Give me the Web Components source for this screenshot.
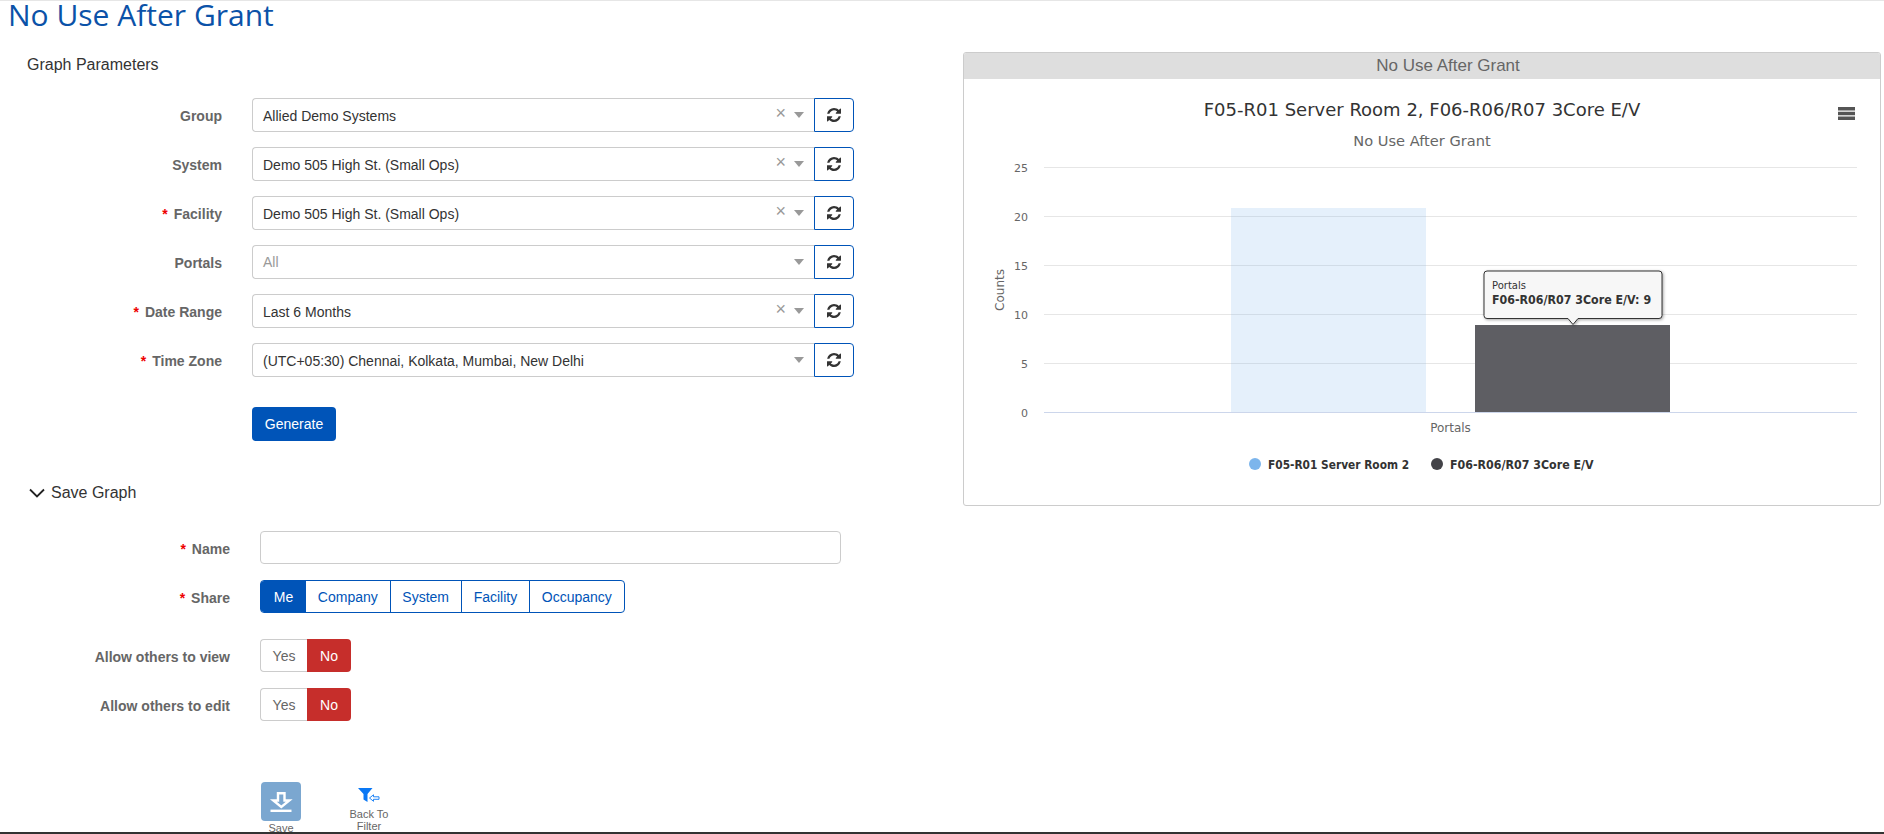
<!DOCTYPE html>
<html lang="en">
<head>
<meta charset="UTF-8">
<title>No Use After Grant</title>
<style>
  html, body { margin: 0; height: 100%; overflow: hidden; background: #fff; }
  body { font-family: "Liberation Sans", Arial, sans-serif; }
</style>
</head>
<body>
<report-page>
  <page-title slot="title">No Use After Grant</page-title>

  <form-section slot="left" heading="Graph Parameters">
    <param-row label="Group"><select-box value="Allied Demo Systems" clearable></select-box><refresh-btn></refresh-btn></param-row>
    <param-row label="System"><select-box value="Demo 505 High St. (Small Ops)" clearable></select-box><refresh-btn></refresh-btn></param-row>
    <param-row label="Facility" required><select-box value="Demo 505 High St. (Small Ops)" clearable></select-box><refresh-btn></refresh-btn></param-row>
    <param-row label="Portals"><select-box placeholder="All"></select-box><refresh-btn></refresh-btn></param-row>
    <param-row label="Date Range" required><select-box value="Last 6 Months" clearable></select-box><refresh-btn></refresh-btn></param-row>
    <param-row label="Time Zone" required><select-box value="(UTC+05:30) Chennai, Kolkata, Mumbai, New Delhi"></select-box><refresh-btn></refresh-btn></param-row>
    <param-row><primary-btn>Generate</primary-btn></param-row>
  </form-section>

  <save-section slot="left">
    <param-row wide label="Name" required><text-box></text-box></param-row>
    <param-row wide label="Share" required><seg-group active="Me" items="Me,Company,System,Facility,Occupancy"></seg-group></param-row>
    <param-row wide label="Allow others to view" class="gap"><yes-no></yes-no></param-row>
    <param-row wide label="Allow others to edit"><yes-no></yes-no></param-row>
    <save-actions></save-actions>
  </save-section>

  <chart-panel slot="right" heading="No Use After Grant"></chart-panel>
</report-page>

<script>
// small helper so every element gets the same open shadow root setup
function shadow(el, html) {
  el.attachShadow({ mode: 'open' }).innerHTML = html;
}

customElements.define('report-page', class extends HTMLElement {
  constructor() {
    super();
    shadow(this, `
      <style>
        :host { display: flex; flex-direction: column; height: 834px; overflow: hidden;
                border-top: 1px solid #e6e6e6; box-sizing: border-box; }
        .body { flex: 1; min-height: 0; overflow: hidden; }
        .cols { display: flex; align-items: flex-start; }
        .left { width: 963px; flex: none; }
        .right { flex: none; width: 918px; margin-top: 21px; }
        .strip { height: 2px; background: #333; flex: none; }
      </style>
      <div class="body">
        <slot name="title"></slot>
        <div class="cols">
          <div class="left"><slot name="left"></slot></div>
          <div class="right"><slot name="right"></slot></div>
        </div>
      </div>
      <div class="strip"></div>`);
  }
});

customElements.define('page-title', class extends HTMLElement {
  constructor() {
    super();
    shadow(this, `
      <style>
        :host { display: block; height: 30px; padding-left: 8px;
                font: 30px/28px "Open Sans", sans-serif; color: #0b52a8; }
      </style><slot></slot>`);
  }
});

customElements.define('form-section', class extends HTMLElement {
  constructor() {
    super();
    shadow(this, `
      <style>
        :host { display: block; }
        h3 { margin: 0; padding: 24px 0 0 27px; height: 43px; box-sizing: content-box;
             font: 400 16px/20px "Liberation Sans", sans-serif; color: #333; }
        .rows { display: flex; flex-direction: column; gap: 15px; }
      </style>
      <h3>${this.getAttribute('heading')}</h3>
      <div class="rows"><slot></slot></div>`);
  }
});

customElements.define('param-row', class extends HTMLElement {
  constructor() {
    super();
    const label = this.getAttribute('label') || '';
    const star = this.hasAttribute('required') ? '<i>*</i>' : '';
    shadow(this, `
      <style>
        :host { display: grid; grid-template-columns: 222px 1fr; column-gap: 30px; }
        :host([wide]) { grid-template-columns: 230px 1fr; }
        .lab { text-align: right; height: 34px; font: 700 14px/36px "Liberation Sans", sans-serif; color: #666; }
        :host([wide]) .lab { height: 33px; line-height: 36px; }
        i { font-style: normal; color: #e00; margin-right: 6px; }
        .ctl { display: flex; }
      </style>
      <div class="lab">${star}${label}</div>
      <div class="ctl"><slot></slot></div>`);
  }
});

customElements.define('select-box', class extends HTMLElement {
  constructor() {
    super();
    const value = this.getAttribute('value');
    const ph = this.getAttribute('placeholder');
    const clear = this.hasAttribute('clearable') ? '<span class="x">×</span>' : '';
    shadow(this, `
      <style>
        :host { display: flex; align-items: center; width: 562px; height: 34px; box-sizing: border-box;
                border: 1px solid #ccc; border-right: 0; border-radius: 4px 0 0 4px; padding: 0 0 0 10px;
                font: 14px "Liberation Sans", sans-serif; color: #333; }
        .v { flex: 1; padding-top: 2px; }
        .ph { color: #999; padding-top: 0; }
        .x { color: #999; font-size: 18px; line-height: 18px; margin: -4px 8px 0 0; }
        .a { width: 0; height: 0; border: 5.500px solid transparent; border-top: 6px solid #999; border-bottom: 0; margin-right: 10px; }
      </style>
      <span class="v ${value ? '' : 'ph'}">${value || ph}</span>${clear}<span class="a"></span>`);
  }
});

customElements.define('refresh-btn', class extends HTMLElement {
  constructor() {
    super();
    shadow(this, `
      <style>
        :host { display: flex; align-items: center; justify-content: center; width: 40px; height: 34px;
                box-sizing: border-box; border: 1px solid #0054b8; border-radius: 0 4px 4px 0; background: #fff; }
        svg { width: 14px; height: 14px; fill: #333; }
      </style>
      <svg viewBox="128 128 1536 1536"><path d="M1639 1056q0 5-1 7-64 268-268 434.500t-478 166.500q-146 0-282.500-55t-243.500-157l-129 129q-19 19-45 19t-45-19-19-45v-448q0-26 19-45t45-19h448q26 0 45 19t19 45-19 45l-137 137q71 66 161 102t187 36q134 0 250-65t186-179q11-17 53-117 8-23 30-23h192q13 0 22.500 9.500t9.500 22.500zm25-800v448q0 26-19 45t-45 19h-448q-26 0-45-19t-19-45 19-45l138-138q-148-137-349-137-134 0-250 65t-186 179q-11 17-53 117-8 23-30 23h-199q-13 0-22.500-9.500t-9.500-22.500v-7q65-268 270-434.500t480-166.500q146 0 284 55.500t245 156.500l130-129q19-19 45-19t45 19 19 45z"/></svg>`);
  }
});

customElements.define('primary-btn', class extends HTMLElement {
  constructor() {
    super();
    shadow(this, `
      <style>
        :host { display: block; width: 84px; height: 34px; margin-top: 15px; background: #0054b8; border-radius: 4px;
                color: #fff; text-align: center; font: 14px/34px "Liberation Sans", sans-serif; }
      </style><slot></slot>`);
  }
});

customElements.define('save-section', class extends HTMLElement {
  constructor() {
    super();
    shadow(this, `
      <style>
        :host { display: block; }
        .head { display: flex; align-items: center; gap: 6px; height: 20px; padding: 42px 0 0 29px;
                font: 16px/20px "Liberation Sans", sans-serif; color: #333; }
        svg { width: 16px; height: 10px; fill: none; stroke: #222; stroke-width: 1.8; }
        .rows { display: flex; flex-direction: column; gap: 16px; margin-top: 28px; }
        ::slotted(.gap) { margin-top: 10px; }
      </style>
      <div class="head"><svg viewBox="0 0 16 10"><path d="M1 1.500l7 7 7-7"/></svg><span>Save Graph</span></div>
      <div class="rows"><slot></slot></div>`);
  }
});

customElements.define('text-box', class extends HTMLElement {
  constructor() {
    super();
    shadow(this, `
      <style>
        :host { display: block; width: 581px; height: 33px; box-sizing: border-box; border: 1px solid #ccc; border-radius: 4px; background: #fff; }
      </style>`);
  }
});

customElements.define('seg-group', class extends HTMLElement {
  constructor() {
    super();
    const active = this.getAttribute('active');
    const items = this.getAttribute('items').split(',');
    shadow(this, `
      <style>
        :host { display: flex; height: 33px; box-sizing: border-box; border: 1px solid #0054b8; border-radius: 4px;
                font: 14px/33px "Liberation Sans", sans-serif; color: #0054b8; overflow: hidden; }
        span { padding: 0 11.800px; border-left: 1px solid #0054b8; }
        span:first-child { border-left: 0; }
        .on { background: #0054b8; color: #fff; }
      </style>
      ${items.map(t => `<span class="${t === active ? 'on' : ''}">${t}</span>`).join('')}`);
  }
});

customElements.define('yes-no', class extends HTMLElement {
  constructor() {
    super();
    shadow(this, `
      <style>
        :host { display: flex; height: 33px; width: 91px; font: 14px/32px "Liberation Sans", sans-serif; text-align: center; }
        .y { width: 47px; box-sizing: border-box; border: 1px solid #ccc; border-right: 0; border-radius: 4px 0 0 4px; color: #666; }
        .n { width: 44px; background: #c62e2b; color: #fff; border-radius: 0 4px 4px 0; line-height: 34px; }
      </style>
      <div class="y">Yes</div><div class="n">No</div>`);
  }
});

customElements.define('save-actions', class extends HTMLElement {
  constructor() {
    super();
    shadow(this, `
      <style>
        :host { display: flex; margin: 45px 0 0 261px; gap: 38px; font: 11px/12px "Liberation Sans", sans-serif; color: #666; text-align: center; }
        .save { width: 40px; }
        .tile { height: 39px; background: #7ba7d0; border-radius: 4px; }
        .tile svg { display: block; width: 40px; height: 39px; fill: none; stroke: #fff; stroke-width: 2.400; }
        .cap { margin-top: 1px; }
        .back { width: 60px; padding-top: 6px; }
        .back svg { display: block; margin: 0 auto 4px; width: 23px; height: 16px; }
      </style>
      <div class="save">
        <div class="tile"><svg viewBox="0 0 40 39"><path d="M17 11.200h6.500v7.300h4.800l-8 6.500-8-6.500h4.700z"/><path d="M9.500 28.800h21"/></svg></div>
        <div class="cap">Save</div>
      </div>
      <div class="back">
        <svg viewBox="0 0 23 16"><path d="M0 0h14.500l-5 6V14l-4-2.500V6z" fill="#0a78f5"/><path d="M11.500 10l4-3.200v2h5.500v2.500h-5.500v2z" fill="#fff" stroke="#0a78f5" stroke-width=".9"/></svg>
        Back To<br>Filter
      </div>`);
  }
});

customElements.define('chart-panel', class extends HTMLElement {
  constructor() {
    super();
    // svg viewBox uses page coordinates so the plot numbers stay readable
    const grid = [167, 216, 265, 314, 363];
    const ticks = [25, 20, 15, 10, 5, 0];
    shadow(this, `
      <style>
        :host { display: block; height: 454px; box-sizing: border-box; border: 1px solid #ccc; border-radius: 3px; overflow: hidden; background: #fff; }
        .hd { height: 26px; background: #dedede; color: #666; text-align: center; padding-left: 52px;
              font: 17px/26px "Liberation Sans", sans-serif; }
        svg { display: block; width: 916px; height: 426px; }
        text { font-family: "DejaVu Sans", sans-serif; }
        .cond { font-stretch: condensed; font-weight: 700; }
        .tip { filter: drop-shadow(1px 1px 1.500px rgba(0,0,0,.35)); }
      </style>
      <div class="hd">${this.getAttribute('heading')}</div>
      <svg viewBox="964 79 916 426">
        <text x="1422" y="116" text-anchor="middle" font-size="18" fill="#333">F05-R01 Server Room 2, F06-R06/R07 3Core E/V</text>
        <text x="1422" y="146" text-anchor="middle" font-size="14.600" fill="#666">No Use After Grant</text>
        <path d="M1838 108.700h17M1838 113.500h17M1838 118.300h17" stroke="#555" stroke-width="3.400"/>
        ${grid.map(y => `<path d="M1044 ${y + .5}H1857" stroke="#e6e6e6"/>`).join('')}
        <path d="M1044 412.500H1857" stroke="#ccd6eb"/>
        ${ticks.map((t, i) => `<text x="1028" y="${172 + i * 49}" text-anchor="end" font-size="11" fill="#666">${t}</text>`).join('')}
        <text transform="translate(1004 290) rotate(-90)" text-anchor="middle" font-size="12" fill="#666">Counts</text>
        <rect x="1231" y="208" width="195" height="204" fill="#7cb5ec" fill-opacity=".2"/>
        <rect x="1475" y="325" width="195" height="87" fill="#5e5e63"/>
        <text x="1450.500" y="432" text-anchor="middle" font-size="12" fill="#666">Portals</text>
        <circle cx="1255" cy="464" r="6" fill="#7cb5ec"/>
        <text class="cond" x="1268" y="468.500" font-size="11.800" fill="#333">F05-R01 Server Room 2</text>
        <circle cx="1437" cy="464" r="6" fill="#434348"/>
        <text class="cond" x="1450" y="468.500" font-size="12.300" fill="#333">F06-R06/R07 3Core E/V</text>
        <path class="tip" d="M1487 271h172a3 3 0 0 1 3 3v41.500a3 3 0 0 1-3 3h-81l-5 6-5-6h-81a3 3 0 0 1-3-3v-41.500a3 3 0 0 1 3-3z" fill="#f7f7f7" stroke="#333" stroke-width="1"/>
        <text x="1492" y="288.500" font-size="10" fill="#333">Portals</text>
        <text class="cond" x="1492" y="304" font-size="12.300" fill="#333">F06-R06/R07 3Core E/V: 9</text>
      </svg>`);
  }
});
</script>
</body>
</html>
